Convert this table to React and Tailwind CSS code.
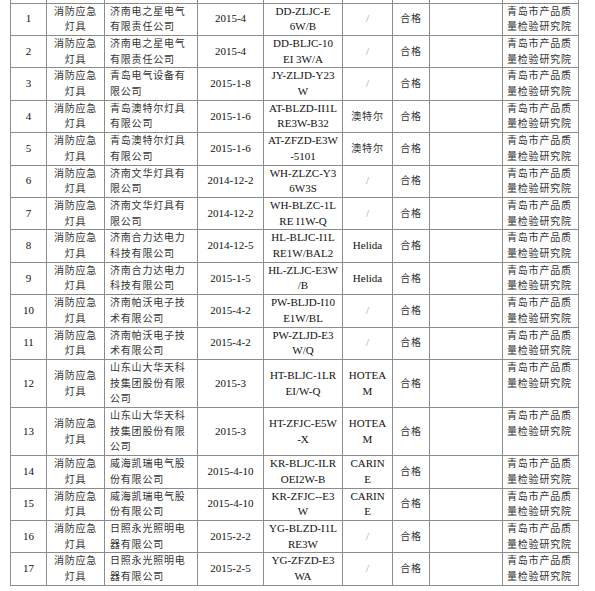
import React from "react";

const ORG = ["青岛市产品质", "量检验研究院"];

const rows = [
  [["济南电之星电气", "有限责任公司"], "2015-4", ["DD-ZLJC-E", "6W/B"], ["/"]],
  [["济南电之星电气", "有限责任公司"], "2015-4", ["DD-BLJC-10", "EI 3W/A"], ["/"]],
  [["青岛电气设备有", "限公司"], "2015-1-8", ["JY-ZLJD-Y23", "W"], ["/"]],
  [["青岛澳特尔灯具", "有限公司"], "2015-1-6", ["AT-BLZD-II1L", "RE3W-B32"], ["澳特尔"]],
  [["青岛澳特尔灯具", "有限公司"], "2015-1-6", ["AT-ZFZD-E3W", "-5101"], ["澳特尔"]],
  [["济南文华灯具有", "限公司"], "2014-12-2", ["WH-ZLZC-Y3", "6W3S"], ["/"]],
  [["济南文华灯具有", "限公司"], "2014-12-2", ["WH-BLZC-1L", "RE I1W-Q"], ["/"]],
  [["济南合力达电力", "科技有限公司"], "2014-12-5", ["HL-BLJC-I1L", "RE1W/BAL2"], ["Helida"]],
  [["济南合力达电力", "科技有限公司"], "2015-1-5", ["HL-ZLJC-E3W", "/B"], ["Helida"]],
  [["济南帕沃电子技", "术有限公司"], "2015-4-2", ["PW-BLJD-I10", "E1W/BL"], ["/"]],
  [["济南帕沃电子技", "术有限公司"], "2015-4-2", ["PW-ZLJD-E3", "W/Q"], ["/"]],
  [["山东山大华天科", "技集团股份有限", "公司"], "2015-3", ["HT-BLJC-1LR", "EI/W-Q"], ["HOTEA", "M"]],
  [["山东山大华天科", "技集团股份有限", "公司"], "2015-3", ["HT-ZFJC-E5W", "-X"], ["HOTEA", "M"]],
  [["威海凯瑞电气股", "份有限公司"], "2015-4-10", ["KR-BLJC-ILR", "OEI2W-B"], ["CARIN", "E"]],
  [["威海凯瑞电气股", "份有限公司"], "2015-4-10", ["KR-ZFJC--E3", "W"], ["CARIN", "E"]],
  [["日照永光照明电", "器有限公司"], "2015-2-2", ["YG-BLZD-I1L", "RE3W"], ["/"]],
  [["日照永光照明电", "器有限公司"], "2015-2-5", ["YG-ZFZD-E3", "WA"], ["/"]],
];

const widths = [36, 58, 93, 66, 79, 50, 37, 73, 76];

// chinese text: smaller glyphs with a bit of spacing, like SimSun
const cjk = "text-[10px] tracking-[0.8px] text-[#333]";

const Lines = ({ lines, className = "" }) => (
  <>
    {lines.map((l, i) => (
      <div key={i} className={className}>
        {l}
      </div>
    ))}
  </>
);

const cell = "border border-[#8c8c8c] p-0 align-middle whitespace-nowrap";

export default function App() {
  return (
    <div
      className="w-[595px] h-[591px] bg-white overflow-hidden text-[11px] leading-[15.7px] text-[#111]"
      style={{ fontFamily: '"Liberation Serif", "Noto Sans CJK SC", serif' }}
    >
      <table className="ml-[10px] w-[568px] table-fixed border-collapse">
        <colgroup>
          {widths.map((w, i) => (
            <col key={i} style={{ width: w }} />
          ))}
        </colgroup>
        <tbody>
          <tr className="h-[3px]">
            {widths.map((w, i) => (
              <td key={i} className="border-x border-b border-[#8c8c8c] p-0 h-[3px]" />
            ))}
          </tr>
          {rows.map(([company, date, model, brand], i) => {
            const latinBrand = /^[A-Za-z]/.test(brand[0]);
            const brandCls =
              brand[0] === "/" ? "text-[#9a9a9a]" : latinBrand ? "" : cjk;
            return (
              <tr key={i}>
                <td className={`${cell} text-center`}>{i + 1}</td>
                <td className={`${cell} text-center`}>
                  <Lines lines={["消防应急", "灯具"]} className={cjk} />
                </td>
                <td className={`${cell} text-left pl-[5px]`}>
                  <Lines lines={company} className={cjk} />
                </td>
                <td className={`${cell} text-center`}>{date}</td>
                <td className={`${cell} text-center`}>
                  <Lines lines={model} />
                </td>
                <td className={`${cell} text-center`}>
                  <Lines lines={brand} className={brandCls} />
                </td>
                <td className={`${cell} text-center`}>
                  <span className={cjk}>合格</span>
                </td>
                <td className={cell} />
                <td className={`${cell} !align-top text-left pl-[4px]`}>
                  <Lines lines={ORG} className={cjk} />
                </td>
              </tr>
            );
          })}
        </tbody>
      </table>
    </div>
  );
}
